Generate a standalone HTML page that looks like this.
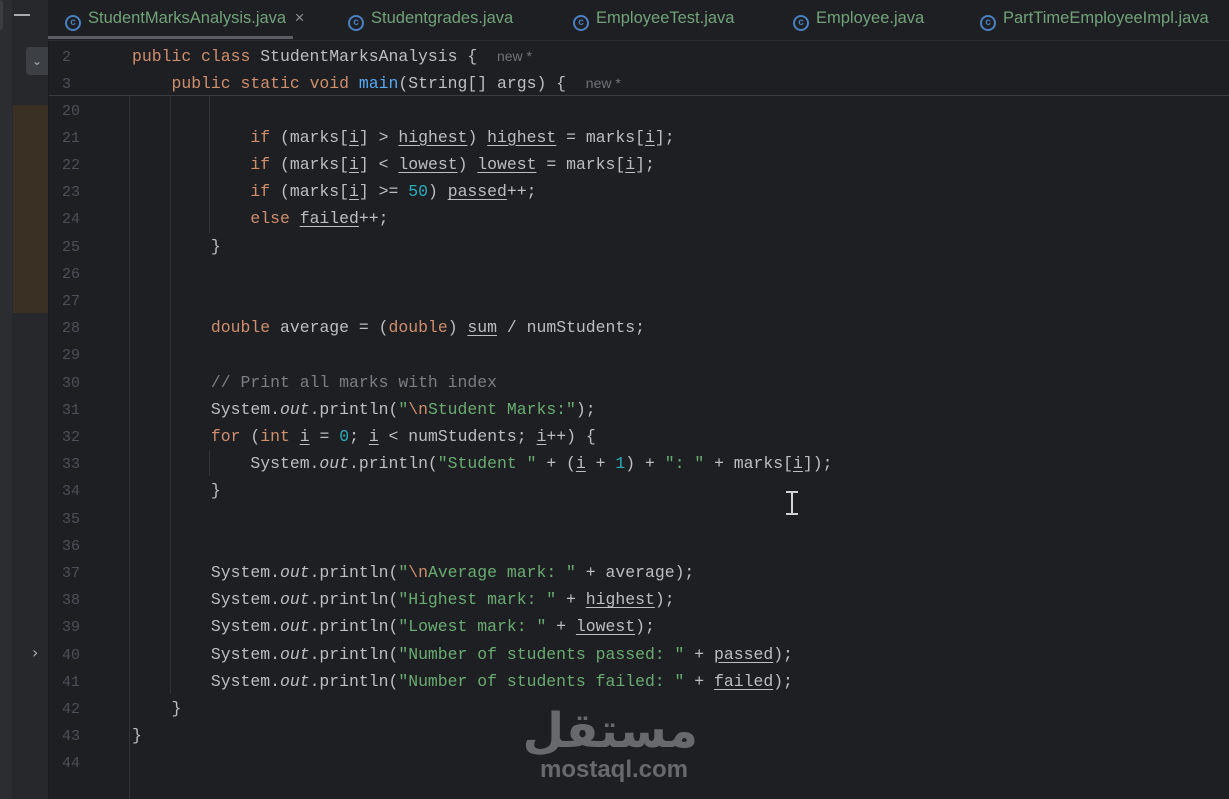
<!DOCTYPE html>
<html><head><meta charset="utf-8"><style>
html,body{margin:0;padding:0;width:1229px;height:799px;overflow:hidden;background:#1e1f22;}
.abs{position:absolute}
.tabs{left:48px;top:0;width:1181px;height:40px;background:#1e1f22;border-bottom:1px solid #2b2d30}
.tab{position:absolute;top:7px;font:16.5px "Liberation Sans",sans-serif;color:#72a27a;height:22px;line-height:22px;white-space:nowrap}
.ic{display:inline-block;width:16px;height:16px;border:2px solid #4a7fc1;border-radius:50%;box-sizing:border-box;vertical-align:-2px;margin-right:7px;position:relative;font:bold 10px "Liberation Sans";color:#4a7fc1;text-align:center;line-height:12px}
.code{font-family:"Liberation Mono",monospace;font-size:16.45px;white-space:pre;color:#bcbec4;height:27.2px;line-height:27.2px;left:132px;margin-top:1px}
.ln{font-family:"Liberation Mono",monospace;font-size:15px;color:#4b5059;left:62px;height:27.2px;line-height:27.2px;margin-top:2px}
.k{color:#cf8e6d}.s{color:#6aab73}.n{color:#2aacb8}.m{color:#56a8f5}.c{color:#7a7e85}.it{font-style:italic}.u{text-decoration:underline;text-underline-offset:3px}.g{color:#6f737a;font-family:"Liberation Sans",sans-serif;font-size:14px}
.guide{position:absolute;width:1px;background:#313338}
</style></head><body>
<div class="abs" style="left:0;top:0;width:12px;height:799px;background:#2b2d30"></div>
<div class="abs" style="left:0;top:0;width:3px;height:30px;background:#3a3c40;border-radius:0 3px 3px 0"></div>
<div class="abs" style="left:12px;top:0;width:36px;height:799px;background:#27282b;border-right:1px solid #1b1c1e"></div>
<div class="abs" style="left:14px;top:14px;width:16px;height:2px;background:#a8abb0"></div>
<div class="abs" style="left:26px;top:47px;width:22px;height:28px;background:#3c3f44;border-radius:4px 0 0 4px;color:#b0b3b8;font:12px 'DejaVu Sans';text-align:center;line-height:28px">&#8964;</div>
<div class="abs" style="left:13px;top:105px;width:35px;height:208px;background:#3b3024"></div>
<div class="abs" style="left:32px;top:643px;color:#a8abb0;font:16px 'DejaVu Sans'">›</div>

<div class="abs tabs">
<div class="abs" style="left:0;top:36px;width:245px;height:3px;background:#5a5d63"></div>
<div class="tab" style="left:17px"><span class="ic">c</span>StudentMarksAnalysis.java <span style="color:#8b8e94;margin-left:4px">×</span></div>
<div class="tab" style="left:300px"><span class="ic">c</span>Studentgrades.java</div>
<div class="tab" style="left:525px"><span class="ic">c</span>EmployeeTest.java</div>
<div class="tab" style="left:745px"><span class="ic">c</span>Employee.java</div>
<div class="tab" style="left:932px"><span class="ic">c</span>PartTimeEmployeeImpl.java</div>
</div>

<div class="abs" style="left:49px;top:95px;width:1180px;height:1px;background:#393b40"></div>
<div class="guide" style="left:129px;top:96px;height:703px;background:#2f3135"></div>
<div class="guide" style="left:170px;top:96px;height:598px"></div>
<div class="guide" style="left:209px;top:96px;height:137px"></div>
<div class="guide" style="left:209px;top:450px;height:26px"></div>

<div class="ln abs" style="top:41.5px">2</div>
<div class="code abs" style="top:41.5px"><span class="k">public class </span>StudentMarksAnalysis {  <span class="g">new *</span></div>
<div class="ln abs" style="top:68.7px">3</div>
<div class="code abs" style="top:68.7px">    <span class="k">public static void </span><span class="m">main</span>(String[] args) {  <span class="g">new *</span></div>

<div class="ln abs" style="top:95.5px">20</div>
<div class="ln abs" style="top:122.7px">21</div><div class="code abs" style="top:122.7px">            <span class="k">if </span>(marks[<span class="u">i</span>] &gt; <span class="u">highest</span>) <span class="u">highest</span> = marks[<span class="u">i</span>];</div>
<div class="ln abs" style="top:149.9px">22</div><div class="code abs" style="top:149.9px">            <span class="k">if </span>(marks[<span class="u">i</span>] &lt; <span class="u">lowest</span>) <span class="u">lowest</span> = marks[<span class="u">i</span>];</div>
<div class="ln abs" style="top:177.1px">23</div><div class="code abs" style="top:177.1px">            <span class="k">if </span>(marks[<span class="u">i</span>] &gt;= <span class="n">50</span>) <span class="u">passed</span>++;</div>
<div class="ln abs" style="top:204.3px">24</div><div class="code abs" style="top:204.3px">            <span class="k">else </span><span class="u">failed</span>++;</div>
<div class="ln abs" style="top:231.5px">25</div><div class="code abs" style="top:231.5px">        }</div>
<div class="ln abs" style="top:258.7px">26</div>
<div class="ln abs" style="top:285.9px">27</div>
<div class="ln abs" style="top:313.1px">28</div><div class="code abs" style="top:313.1px">        <span class="k">double </span>average = (<span class="k">double</span>) <span class="u">sum</span> / numStudents;</div>
<div class="ln abs" style="top:340.3px">29</div>
<div class="ln abs" style="top:367.5px">30</div><div class="code abs" style="top:367.5px">        <span class="c">// Print all marks with index</span></div>
<div class="ln abs" style="top:394.7px">31</div><div class="code abs" style="top:394.7px">        System.<span class="it">out</span>.println(<span class="s">"</span><span class="k">\n</span><span class="s">Student Marks:"</span>);</div>
<div class="ln abs" style="top:421.9px">32</div><div class="code abs" style="top:421.9px">        <span class="k">for </span>(<span class="k">int </span><span class="u">i</span> = <span class="n">0</span>; <span class="u">i</span> &lt; numStudents; <span class="u">i</span>++) {</div>
<div class="ln abs" style="top:449.1px">33</div><div class="code abs" style="top:449.1px">            System.<span class="it">out</span>.println(<span class="s">"Student "</span> + (<span class="u">i</span> + <span class="n">1</span>) + <span class="s">": "</span> + marks[<span class="u">i</span>]);</div>
<div class="ln abs" style="top:476.3px">34</div><div class="code abs" style="top:476.3px">        }</div>
<div class="ln abs" style="top:503.5px">35</div>
<div class="ln abs" style="top:530.7px">36</div>
<div class="ln abs" style="top:557.9px">37</div><div class="code abs" style="top:557.9px">        System.<span class="it">out</span>.println(<span class="s">"</span><span class="k">\n</span><span class="s">Average mark: "</span> + average);</div>
<div class="ln abs" style="top:585.1px">38</div><div class="code abs" style="top:585.1px">        System.<span class="it">out</span>.println(<span class="s">"Highest mark: "</span> + <span class="u">highest</span>);</div>
<div class="ln abs" style="top:612.3px">39</div><div class="code abs" style="top:612.3px">        System.<span class="it">out</span>.println(<span class="s">"Lowest mark: "</span> + <span class="u">lowest</span>);</div>
<div class="ln abs" style="top:639.5px">40</div><div class="code abs" style="top:639.5px">        System.<span class="it">out</span>.println(<span class="s">"Number of students passed: "</span> + <span class="u">passed</span>);</div>
<div class="ln abs" style="top:666.7px">41</div><div class="code abs" style="top:666.7px">        System.<span class="it">out</span>.println(<span class="s">"Number of students failed: "</span> + <span class="u">failed</span>);</div>
<div class="ln abs" style="top:693.9px">42</div><div class="code abs" style="top:693.9px">    }</div>
<div class="ln abs" style="top:721.1px">43</div><div class="code abs" style="top:721.1px">}</div>
<div class="ln abs" style="top:748.3px">44</div>

<div class="abs" style="left:786px;top:491px;width:12px;height:24px">
<div class="abs" style="left:5px;top:1px;width:2px;height:22px;background:#d0d2d6"></div>
<div class="abs" style="left:0;top:0;width:12px;height:2px;background:#d0d2d6"></div>
<div class="abs" style="left:0;top:22px;width:12px;height:2px;background:#d0d2d6"></div>
</div>

<div class="abs" style="left:530px;top:704px;width:168px;text-align:center;color:#67696c;font:bold 48px 'DejaVu Sans','Noto Sans CJK SC',sans-serif;line-height:54px;direction:rtl">مستقل</div>
<div class="abs" style="left:530px;top:754px;width:168px;text-align:center;color:#67696c;font:bold 24px 'Liberation Sans',sans-serif;line-height:32px">mostaql.com</div>
</body></html>
